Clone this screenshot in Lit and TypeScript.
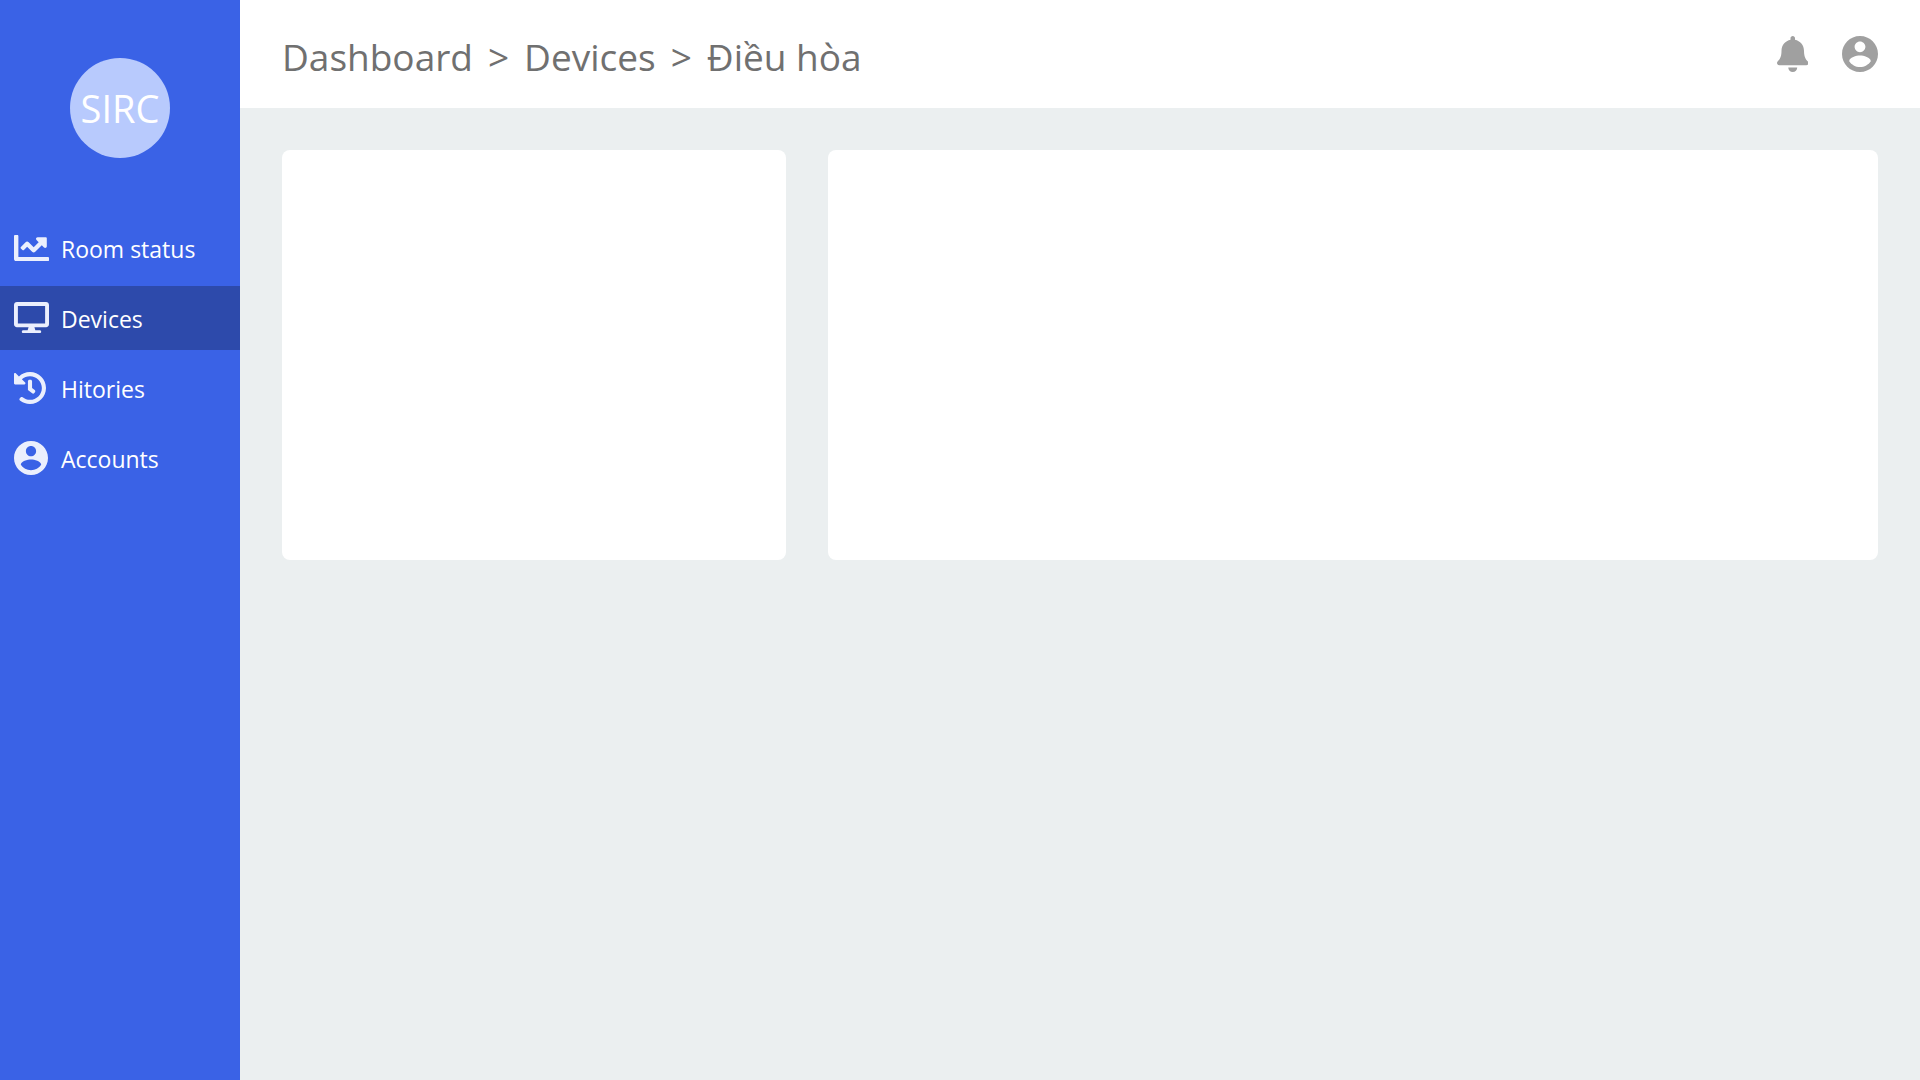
import { LitElement, html, css, svg, nothing } from "lit";
import { customElement } from "lit/decorators.js";

const icons = {
  chart: {
    box: "0 64 512 384",
    path: "M496 384H64V80c0-8.84-7.16-16-16-16H16C7.16 64 0 71.16 0 80v336c0 17.67 14.33 32 32 32h464c8.84 0 16-7.16 16-16v-32c0-8.84-7.16-16-16-16zM464 96H345.94c-21.38 0-32.09 25.85-16.97 40.97l32.4 32.4L288 242.75l-73.37-73.37c-12.5-12.5-32.76-12.5-45.25 0l-68.69 68.69c-6.25 6.25-6.25 16.38 0 22.63l22.62 22.62c6.25 6.25 16.38 6.25 22.63 0L192 237.25l73.37 73.37c12.5 12.5 32.76 12.5 45.25 0l96-96 32.4 32.4c15.12 15.12 40.97 4.41 40.97-16.97V112c.01-8.84-7.15-16-15.99-16z",
  },
  desktop: {
    box: "0 0 576 512",
    path: "M528 0H48C21.5 0 0 21.5 0 48v320c0 26.5 21.5 48 48 48h192l-16 48h-72c-13.3 0-24 10.7-24 24s10.7 24 24 24h272c13.3 0 24-10.7 24-24s-10.7-24-24-24h-72l-16-48h192c26.5 0 48-21.5 48-48V48c0-26.5-21.5-48-48-48zm-16 352H64V64h448v288z",
  },
  history: {
    box: "8 8 496 496",
    path: "M504 255.531c.253 136.64-111.18 248.372-247.82 248.468-59.015.042-113.223-20.53-155.822-54.911-11.077-8.94-11.905-25.541-1.839-35.607l11.267-11.267c8.609-8.609 22.353-9.551 31.891-1.984C173.062 425.135 212.781 440 256 440c101.705 0 184-82.311 184-184 0-101.705-82.311-184-184-184-48.814 0-93.149 18.969-126.068 49.932l50.754 50.754c10.08 10.08 2.941 27.314-11.313 27.314H24c-8.837 0-16-7.163-16-16V38.627c0-14.254 17.234-21.393 27.314-11.314l49.372 49.372C129.209 34.136 189.552 8 256 8c136.81 0 247.747 110.78 248 247.531zm-180.912 78.784l9.823-12.63c8.138-10.463 6.253-25.542-4.21-33.679L288 256.349V152c0-13.255-10.745-24-24-24h-16c-13.255 0-24 10.745-24 24v135.651l65.409 50.874c10.463 8.137 25.541 6.253 33.679-4.21z",
  },
  account: {
    box: "2 2 20 20",
    path: "M12 2C6.48 2 2 6.48 2 12s4.48 10 10 10 10-4.48 10-10S17.52 2 12 2zm0 3c1.66 0 3 1.34 3 3s-1.34 3-3 3-3-1.34-3-3 1.34-3 3-3zm0 14.2c-2.5 0-4.71-1.28-6-3.22.03-1.99 4-3.08 6-3.08 1.99 0 5.97 1.09 6 3.08-1.29 1.94-3.5 3.22-6 3.22z",
  },
  bell: {
    box: "0 0 448 512",
    path: "M224 512c35.32 0 63.97-28.65 63.97-64H160.03c0 35.35 28.65 64 63.97 64zm215.39-149.71c-19.32-20.76-55.47-51.99-55.47-154.29 0-77.7-54.48-139.9-127.94-155.16V32c0-17.67-14.32-32-31.98-32s-31.98 14.33-31.98 32v20.84C118.56 68.1 64.08 130.3 64.08 208c0 102.3-36.15 133.53-55.47 154.29-6 6.45-8.66 14.16-8.61 21.71.11 16.4 12.98 32 32.1 32h383.8c19.12 0 32-15.6 32.1-32 .05-7.55-2.61-15.27-8.61-21.71z",
  },
};

type IconName = keyof typeof icons;

const icon = (name: IconName) => html`<svg
  class="icon ${name}"
  viewBox=${icons[name].box}
  aria-hidden="true"
>
  ${svg`<path fill="currentColor" fill-rule="evenodd" d=${icons[name].path}></path>`}
</svg>`;

const links: { label: string; icon: IconName; current?: boolean }[] = [
  { label: "Room status", icon: "chart" },
  { label: "Devices", icon: "desktop", current: true },
  { label: "Hitories", icon: "history" },
  { label: "Accounts", icon: "account" },
];

@customElement("app-root")
export class AppRoot extends LitElement {
  static styles = css`
    :host {
      display: grid;
      grid-template-columns: 240px minmax(0, 1fr);
      min-height: 100vh;
      background: #ebeff0;
      font-family: "Segoe UI", "Open Sans", "Noto Sans", sans-serif;
    }
    a {
      color: inherit;
      text-decoration: none;
    }
    .icon {
      display: block;
      flex: none;
    }
    .sidebar {
      background: #3a62e6;
      color: #fff;
    }
    .logo {
      display: grid;
      place-items: center;
      width: 100px;
      height: 100px;
      margin: 58px auto;
      border-radius: 50%;
      background: #b8cafd;
      font-size: 38px;
    }
    .menu {
      display: flex;
      flex-direction: column;
      gap: 6px;
      margin: 0;
      padding: 0;
      list-style: none;
    }
    .link {
      display: grid;
      grid-template-columns: 35px 1fr;
      column-gap: 12px;
      align-items: center;
      height: 64px;
      padding: 0 14px;
      font-size: 23px;
    }
    .link[aria-current="page"] {
      background: #2d4aab;
    }
    .link .icon {
      color: #ebeffd;
    }
    .label {
      padding-top: 2px;
    }
    .chart,
    .desktop {
      width: 35px;
    }
    .history {
      width: 32px;
    }
    .account {
      width: 34px;
    }
    .header {
      display: flex;
      align-items: center;
      justify-content: space-between;
      height: 108px;
      padding: 0 42px;
      background: #fff;
    }
    .crumbs {
      display: flex;
      gap: 15px;
      margin: 0;
      padding-top: 4px;
      color: #707070;
      font-size: 37px;
      font-weight: 400;
    }
    .actions {
      display: flex;
      gap: 34px;
      color: #a0a0a0;
    }
    .action {
      padding: 0;
      border: 0;
      background: none;
      color: inherit;
      cursor: pointer;
    }
    .action .icon {
      height: 36px;
      width: auto;
    }
    .content {
      display: grid;
      grid-template-columns: 12fr 25fr;
      gap: 42px;
      padding: 42px;
    }
    .card {
      min-height: 410px;
      border-radius: 8px;
      background: #fff;
    }
  `;

  render() {
    return html`
      <aside class="sidebar">
        <div class="logo">SIRC</div>
        <nav>
          <ul class="menu">
            ${links.map(
              (link) => html`<li>
                <a class="link" href="#" aria-current=${link.current ? "page" : nothing}>
                  ${icon(link.icon)}<span class="label">${link.label}</span>
                </a>
              </li>`
            )}
          </ul>
        </nav>
      </aside>
      <div class="page">
        <header class="header">
          <h1 class="crumbs">
            <a href="#">Dashboard</a>
            <span>&gt;</span>
            <a href="#">Devices</a>
            <span>&gt;</span>
            <span>Điều hòa</span>
          </h1>
          <div class="actions">
            <button class="action" type="button" aria-label="Notifications">${icon("bell")}</button>
            <button class="action" type="button" aria-label="Account">${icon("account")}</button>
          </div>
        </header>
        <main class="content">
          <section class="card"></section>
          <section class="card"></section>
        </main>
      </div>
    `;
  }
}
